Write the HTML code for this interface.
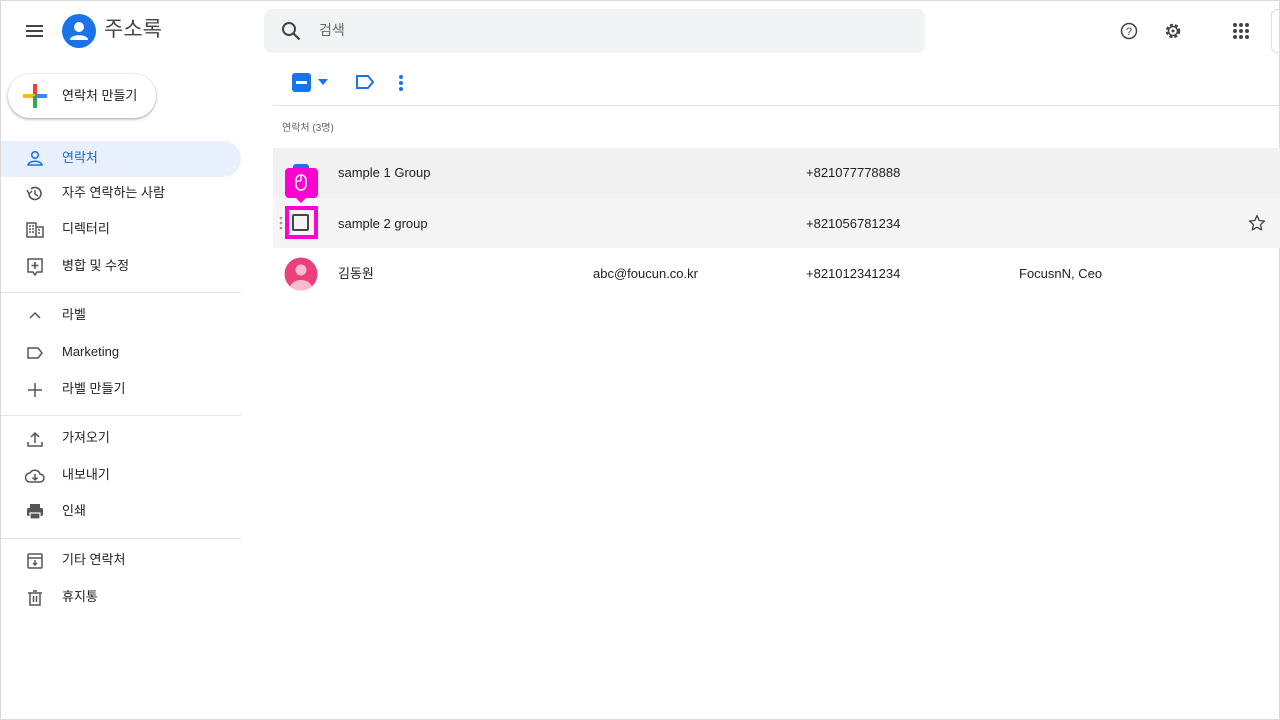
<!DOCTYPE html>
<html><head><meta charset="utf-8"><style>
*{box-sizing:border-box;margin:0;padding:0}
body{width:1280px;height:720px;position:relative;overflow:hidden;background:#fff;font-family:"Liberation Sans","Noto Sans CJK KR",sans-serif;color:#202124;border:1px solid #dadada;line-height:1.15}
.a{position:absolute}
.t{font-size:13px;white-space:nowrap;line-height:15px}
.nav{position:absolute;left:0;width:240px;height:36px;display:flex;align-items:center}
.nav svg{position:absolute;left:24px}
.nav span{position:absolute;left:61px;font-size:13px;color:#202124;line-height:15px;top:9px}
.hr{position:absolute;left:0;width:240px;height:1px;background:#e3e3e3}
</style></head><body>
<svg class="a" style="left:24px;top:22px" width="20" height="16"><path d="M1 3h17M1 8h17M1 13h17" stroke="#444" stroke-width="2"/></svg>
<svg class="a" style="left:61px;top:13px" width="34" height="34"><circle cx="17" cy="17" r="17" fill="#1a73e8"/><circle cx="17" cy="13" r="5" fill="#fff"/><path d="M8 25c2-5 16-5 18 0v1H8z" fill="#fff"/></svg>
<div class="a" style="left:103px;top:17px;font-size:21px;color:#444;line-height:24px">주소록</div>
<div class="a" style="left:263px;top:8px;width:661px;height:44px;background:#f1f3f4;border-radius:8px"></div>
<svg class="a" style="left:280px;top:20px" width="20" height="20"><circle cx="8" cy="8" r="6" stroke="#444" stroke-width="2" fill="none"/><path d="M12.5 12.5l6 6" stroke="#444" stroke-width="2.2"/></svg>
<div class="a t" style="left:318px;top:22px;color:#666;font-size:14px">검색</div>
<svg class="a" style="left:1119px;top:21px" width="18" height="18"><circle cx="9" cy="9" r="7.5" stroke="#444" stroke-width="1.5" fill="none"/><text x="9" y="13" font-size="11" text-anchor="middle" fill="#444" font-family="Liberation Sans">?</text></svg>
<svg class="a" style="left:1163px;top:21px" width="18" height="18"><circle cx="9" cy="9" r="6" stroke="#444" stroke-width="2.5" fill="none" stroke-dasharray="3 2"/><circle cx="9" cy="9" r="4.5" stroke="#444" stroke-width="1.5" fill="none"/><circle cx="9" cy="9" r="1.5" fill="#444"/></svg>
<svg class="a" style="left:1232px;top:22px" width="18" height="18" fill="#444"><circle cx="2" cy="2" r="2"/><circle cx="8" cy="2" r="2"/><circle cx="14" cy="2" r="2"/><circle cx="2" cy="8" r="2"/><circle cx="8" cy="8" r="2"/><circle cx="14" cy="8" r="2"/><circle cx="2" cy="14" r="2"/><circle cx="8" cy="14" r="2"/><circle cx="14" cy="14" r="2"/></svg>
<div class="a" style="left:1270px;top:8px;width:20px;height:44px;border:1px solid #ddd;border-radius:6px"></div>
<div class="a" style="left:7px;top:73px;width:148px;height:44px;border-radius:22px;background:#fff;box-shadow:0 1px 3px rgba(60,64,67,.35),0 1px 2px rgba(60,64,67,.2)"></div>
<svg class="a" style="left:22px;top:83px" width="24" height="24"><rect x="10" y="0" width="4" height="12" fill="#ea4335"/><rect x="0" y="10" width="12" height="4" fill="#fbbc04"/><rect x="10" y="12" width="4" height="12" fill="#34a853"/><rect x="12" y="10" width="12" height="4" fill="#4285f4"/></svg>
<div class="a t" style="left:61px;top:87px">연락처 만들기</div>
<div class="a" style="left:0;top:140px;width:240px;height:36px;background:#e8f0fe;border-radius:0 18px 18px 0"></div>
<div class="nav" style="top:140px"><svg width="20" height="20"><circle cx="10" cy="6" r="3.3" stroke="#1a73e8" stroke-width="1.6" fill="none"/><path d="M3 16c1-5 13-5 14 0z" stroke="#1a73e8" stroke-width="1.6" fill="none"/></svg><span style="color:#1967d2">연락처</span></div>
<div class="nav" style="top:175px"><svg width="20" height="20"><path d="M4 10a6 6 0 1 0 2-5" stroke="#555" stroke-width="1.6" fill="none"/><path d="M2 6l2 4 3-3" stroke="#555" stroke-width="1.4" fill="none"/><path d="M10 6v4l3 2" stroke="#555" stroke-width="1.5" fill="none"/></svg><span>자주 연락하는 사람</span></div>
<div class="nav" style="top:211px"><svg width="20" height="20"><path d="M2 3h9v14H2zM11 7h7v10h-7" stroke="#555" stroke-width="1.5" fill="none"/><path d="M4 6h2M7 6h2M4 9h2M7 9h2M4 12h2M7 12h2M13 10h2M13 13h2" stroke="#555" stroke-width="1.5"/></svg><span>디렉터리</span></div>
<div class="nav" style="top:248px"><svg width="20" height="20"><path d="M3 2h14v13h-5l-2 3-2-3H3z" stroke="#555" stroke-width="1.5" fill="none"/><path d="M10 5v7M6.5 8.5h7" stroke="#555" stroke-width="1.6"/></svg><span>병합 및 수정</span></div>
<div class="hr" style="top:291px"></div>
<div class="nav" style="top:297px"><svg width="20" height="20"><path d="M5 12l5-5 5 5" stroke="#555" stroke-width="1.5" fill="none"/></svg><span>라벨</span></div>
<div class="nav" style="top:334px"><svg width="20" height="20"><path d="M3 5h10l4 5-4 5H3z" stroke="#555" stroke-width="1.5" fill="none"/></svg><span>Marketing</span></div>
<div class="nav" style="top:371px"><svg width="20" height="20"><path d="M10 3v14M3 10h14" stroke="#555" stroke-width="1.5"/></svg><span>라벨 만들기</span></div>
<div class="hr" style="top:414px"></div>
<div class="nav" style="top:420px"><svg width="20" height="20"><path d="M3 13v4h14v-4M10 14V4M6 8l4-4 4 4" stroke="#555" stroke-width="1.5" fill="none"/></svg><span>가져오기</span></div>
<div class="nav" style="top:457px"><svg width="20" height="20"><path d="M5 16h10a4 4 0 0 0 0-8 5.5 5.5 0 0 0-10-1 4.5 4.5 0 0 0 0 9z" stroke="#555" stroke-width="1.5" fill="none"/><path d="M10 8v6M7.5 11.5l2.5 2.5 2.5-2.5" stroke="#555" stroke-width="1.5" fill="none"/></svg><span>내보내기</span></div>
<div class="nav" style="top:493px"><svg width="20" height="20"><rect x="5" y="2" width="10" height="4" fill="#555"/><rect x="2" y="6" width="16" height="8" rx="1.5" fill="#555"/><rect x="5" y="11" width="10" height="6" fill="#555" stroke="#fff" stroke-width="1.2"/></svg><span>인쇄</span></div>
<div class="hr" style="top:537px"></div>
<div class="nav" style="top:542px"><svg width="20" height="20"><rect x="3" y="3" width="14" height="14" rx="1" stroke="#555" stroke-width="1.5" fill="none"/><path d="M3 7h14M10 9v5M8 12l2 2 2-2" stroke="#555" stroke-width="1.4" fill="none"/></svg><span>기타 연락처</span></div>
<div class="nav" style="top:579px"><svg width="20" height="20"><path d="M5 5h10v12H5zM3 5h14M8 3h4M8.5 8v6M11.5 8v6" stroke="#555" stroke-width="1.5" fill="none"/></svg><span>휴지통</span></div>
<div class="a" style="left:291px;top:72px;width:19px;height:19px;background:#1a73e8;border-radius:3px"></div>
<div class="a" style="left:295px;top:80px;width:11px;height:3px;background:#fff"></div>
<svg class="a" style="left:317px;top:78px" width="10" height="6"><path d="M0 0h10L5 6z" fill="#1a73e8"/></svg>
<svg class="a" style="left:353px;top:72px" width="22" height="18"><path d="M3 3h11l5 6-5 6H3z" stroke="#1a73e8" stroke-width="2" fill="none"/></svg>
<svg class="a" style="left:397px;top:73px" width="6" height="18" fill="#1a73e8"><circle cx="3" cy="3" r="2"/><circle cx="3" cy="9" r="2"/><circle cx="3" cy="15" r="2"/></svg>
<div class="a" style="left:272px;top:104px;width:1008px;height:1px;background:#e3e3e3"></div>
<div class="a" style="left:281px;top:122px;font-size:10px;color:#5f6368;line-height:12px">연락처 (3명)</div>
<div class="a" style="left:272px;top:147px;width:1008px;height:50px;background:#f1f1f1"></div>
<div class="a" style="left:272px;top:197px;width:1008px;height:50px;background:#f5f5f5"></div>
<div class="a" style="left:292px;top:163px;width:16px;height:10px;background:#1a73e8;border-radius:3px"></div>
<div class="a" style="left:284px;top:167px;width:33px;height:30px;background:#ff00d0;border-radius:4px"></div>
<svg class="a" style="left:294px;top:173px" width="12" height="17"><rect x="1" y="1" width="10" height="15" rx="5" stroke="#fff" stroke-width="1.6" fill="none"/><path d="M6 1v6M1 7h5" stroke="#fff" stroke-width="1.3"/></svg>
<svg class="a" style="left:294px;top:196px" width="12" height="7"><path d="M0 0h12L6 6z" fill="#ff00d0"/></svg>
<div class="a" style="left:284px;top:205px;width:33px;height:33px;background:#ff00d0"></div>
<div class="a" style="left:288px;top:209px;width:25px;height:25px;background:#f5f5f5"></div>
<div class="a" style="left:291px;top:213px;width:17px;height:17px;border:2px solid #444;border-radius:2px"></div>
<svg class="a" style="left:278px;top:215px" width="4" height="14" fill="#999"><circle cx="2" cy="2" r="1.3"/><circle cx="2" cy="7" r="1.3"/><circle cx="2" cy="12" r="1.3"/></svg>
<svg class="a" style="left:283px;top:256px" width="34" height="34"><clipPath id="c"><circle cx="17" cy="17" r="16.5"/></clipPath><circle cx="17" cy="17" r="16.5" fill="#ec407a"/><g clip-path="url(#c)" fill="#f8bbd0"><circle cx="17" cy="13" r="5.5"/><ellipse cx="17" cy="31" rx="11" ry="8"/></g></svg>
<div class="a t" style="left:337px;top:164px">sample 1 Group</div>
<div class="a t" style="left:805px;top:164px">+821077778888</div>
<div class="a t" style="left:337px;top:215px">sample 2 group</div>
<div class="a t" style="left:805px;top:215px">+821056781234</div>
<svg class="a" style="left:1247px;top:213px" width="18" height="18"><path d="M9 1.5l2.2 5 5.3.5-4 3.6 1.2 5.3L9 13.2l-4.7 2.7 1.2-5.3-4-3.6 5.3-.5z" stroke="#444" stroke-width="1.3" fill="none" stroke-linejoin="round"/></svg>
<div class="a t" style="left:337px;top:265px">김동원</div>
<div class="a t" style="left:592px;top:265px">abc@foucun.co.kr</div>
<div class="a t" style="left:805px;top:265px">+821012341234</div>
<div class="a t" style="left:1018px;top:265px">FocusnN, Ceo</div>
</body></html>
